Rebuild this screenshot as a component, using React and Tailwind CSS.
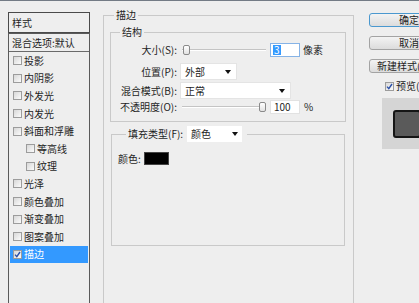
import React from "react";

function Tri() {
  return (
    <svg width="6" height="4" viewBox="0 0 6 4" className="shrink-0">
      <path d="M0 0h6L3 4z" fill="#111" />
    </svg>
  );
}

function Cb({ checked, className = "" }) {
  return (
    <span
      className={
        "inline-flex w-[9px] h-[9px] shrink-0 items-center justify-center border border-[#9c9c9c] bg-linear-to-br from-[#d8d8d8] to-[#fbfbfb] " +
        className
      }
    >
      {checked && (
        <svg width="7" height="7" viewBox="0 0 7 7">
          <path d="M1 3.6 L2.8 5.6 L6 1" fill="none" stroke="#2a4fa8" strokeWidth="1.4" />
        </svg>
      )}
    </span>
  );
}

function Slider({ pos }) {
  return (
    <div className="relative ml-[5px] flex h-[14px] w-[84px] items-center">
      <div className="h-[2px] w-full border-b border-white bg-[#c4c4c4]" />
      <div
        className={
          "absolute top-[2px] h-[10px] w-[7px] rounded-[2px] border border-[#8a8a8a] bg-linear-to-b from-white to-[#e2e2e2] " +
          (pos === "start" ? "left-[1px]" : "left-[77px]")
        }
      />
    </div>
  );
}

function Select({ text, w }) {
  return (
    <div
      className={
        "ml-[3px] flex h-[17px] items-center justify-between border border-[#e4e4e4] bg-white pl-[4px] pr-[5px] " + w
      }
    >
      <span>{text}</span>
      <Tri />
    </div>
  );
}

const items = [
  ["投影", false],
  ["内阴影", false],
  ["外发光", false],
  ["内发光", false],
  ["斜面和浮雕", false],
  ["等高线", true],
  ["纹理", true],
  ["光泽", false],
  ["颜色叠加", false],
  ["渐变叠加", false],
  ["图案叠加", false],
];

export default function App() {
  return (
    <div className="relative h-[303px] w-[419px] overflow-hidden bg-[#eeeeee] text-[10px] leading-[12px] text-[#1e1e1e] [font-family:'Noto_Sans_CJK_SC','Liberation_Sans',sans-serif]">
      <div className="h-px bg-[#737b85]" />
      <div className="flex h-[302px]">
        {/* left list */}
        <div className="ml-[8px] mt-[11px] flex w-[82px] shrink-0 flex-col">
          <div className="flex h-[21px] items-center border border-[#4a4a4a] pl-[3px]">样式</div>
          <div className="flex flex-1 flex-col border-x border-t border-[#5a5a5a] px-[1px]">
            <div className="-mx-[1px] flex h-[18px] items-center border-b border-[#6a6a6a] pl-[3px]">
              混合选项:默认
            </div>
            {items.map(([t, ind]) => (
              <div key={t} className="flex h-[17.6px] items-center">
                <Cb className={ind ? "ml-[16px]" : "ml-[3px]"} />
                <span className="ml-[2px]">{t}</span>
              </div>
            ))}
            <div className="flex h-[17.6px] items-center bg-[#3399ff] text-white">
              <Cb className="ml-[3px]" checked />
              <span className="ml-[2px]">描边</span>
            </div>
          </div>
        </div>

        {/* middle */}
        <div className="ml-[13px] mt-[8px] w-[251px] shrink-0">
          <fieldset className="m-0 border border-[#c9c9c9] p-0">
            <legend className="ml-[10px] px-[2px] leading-[12px]">描边</legend>
            <div className="h-[320px] pl-[6px]">
              <fieldset className="m-0 mt-[5px] w-[236px] border border-[#c9c9c9] p-0">
                <legend className="ml-[9px] px-[2px] leading-[12px]">结构</legend>
                <div className="pb-[7px]">
                  <div className="mt-[5px] flex h-[14px] items-center">
                    <span className="w-[66px] text-right">大小(S):</span>
                    <Slider pos="start" />
                    <div className="ml-[4px] flex h-[14px] w-[30px] items-center border border-[#86b3e6] bg-white pl-[2px]">
                      <span className="bg-[#3399ff] px-[1px] leading-[10px] text-white">3</span>
                    </div>
                    <span className="ml-[3px]">像素</span>
                  </div>
                  <div className="mt-[6px] flex h-[17px] items-center">
                    <span className="w-[66px] text-right">位置(P):</span>
                    <Select text="外部" w="w-[57px]" />
                  </div>
                  <div className="mt-[2px] flex h-[17px] items-center">
                    <span className="w-[66px] text-right">混合模式(B):</span>
                    <Select text="正常" w="w-[111px]" />
                  </div>
                  <div className="mt-[1px] flex h-[14px] items-center">
                    <span className="w-[66px] text-right">不透明度(O):</span>
                    <Slider pos="end" />
                    <div className="ml-[4px] flex h-[14px] w-[30px] items-center border border-[#e2e2e2] bg-white pl-[3px]">
                      100
                    </div>
                    <span className="ml-[4px]">%</span>
                  </div>
                </div>
              </fieldset>

              <fieldset className="m-0 ml-[1px] mt-[4px] w-[234px] border border-[#c9c9c9] p-0">
                <legend className="ml-[14px] flex items-center pl-[2px] pr-[5px]">
                  <span>填充类型(F):</span>
                  <div className="ml-[4px] flex h-[16px] w-[55px] items-center justify-between bg-white pl-[4px] pr-[4px]">
                    <span>颜色</span>
                    <Tri />
                  </div>
                </legend>
                <div className="h-[93px]">
                  <div className="mt-[10px] flex h-[13px] items-center pl-[6px]">
                    <span>颜色:</span>
                    <div className="ml-[3px] h-[13px] w-[25px] border border-[#444] bg-black" />
                  </div>
                </div>
              </fieldset>
            </div>
          </fieldset>
        </div>

        {/* right */}
        <div className="ml-[15px] mt-[12px] flex w-[80px] shrink-0 flex-col">
          <button className="flex h-[14px] w-[80px] items-center justify-center rounded-[3px] border border-[#4a98cf] bg-linear-to-b from-[#f3f3f3] to-[#dcdcdc] leading-none">
            确定
          </button>
          <button className="mt-[9px] flex h-[14px] w-[80px] items-center justify-center rounded-[3px] border border-[#a3a3a3] bg-linear-to-b from-[#f3f3f3] to-[#dcdcdc] leading-none">
            取消
          </button>
          <button className="mt-[9px] flex h-[14px] w-[80px] items-center justify-center rounded-[3px] border border-[#a3a3a3] bg-linear-to-b from-[#f3f3f3] to-[#dcdcdc] leading-none">
            新建样式(W)...
          </button>
          <div className="ml-[16px] mt-[8px] flex h-[10px] items-center">
            <Cb checked />
            <span className="ml-[2px]">预览(V)</span>
          </div>
          <div className="ml-[13px] mt-[7px] h-[51px] w-[54px] bg-[#d5d5d5] pl-[11px] pt-[12px]">
            <div className="h-[28px] w-[28px] rounded-[3px] border-2 border-[#151515] bg-[#5a5a5a]" />
          </div>
        </div>
      </div>
    </div>
  );
}
